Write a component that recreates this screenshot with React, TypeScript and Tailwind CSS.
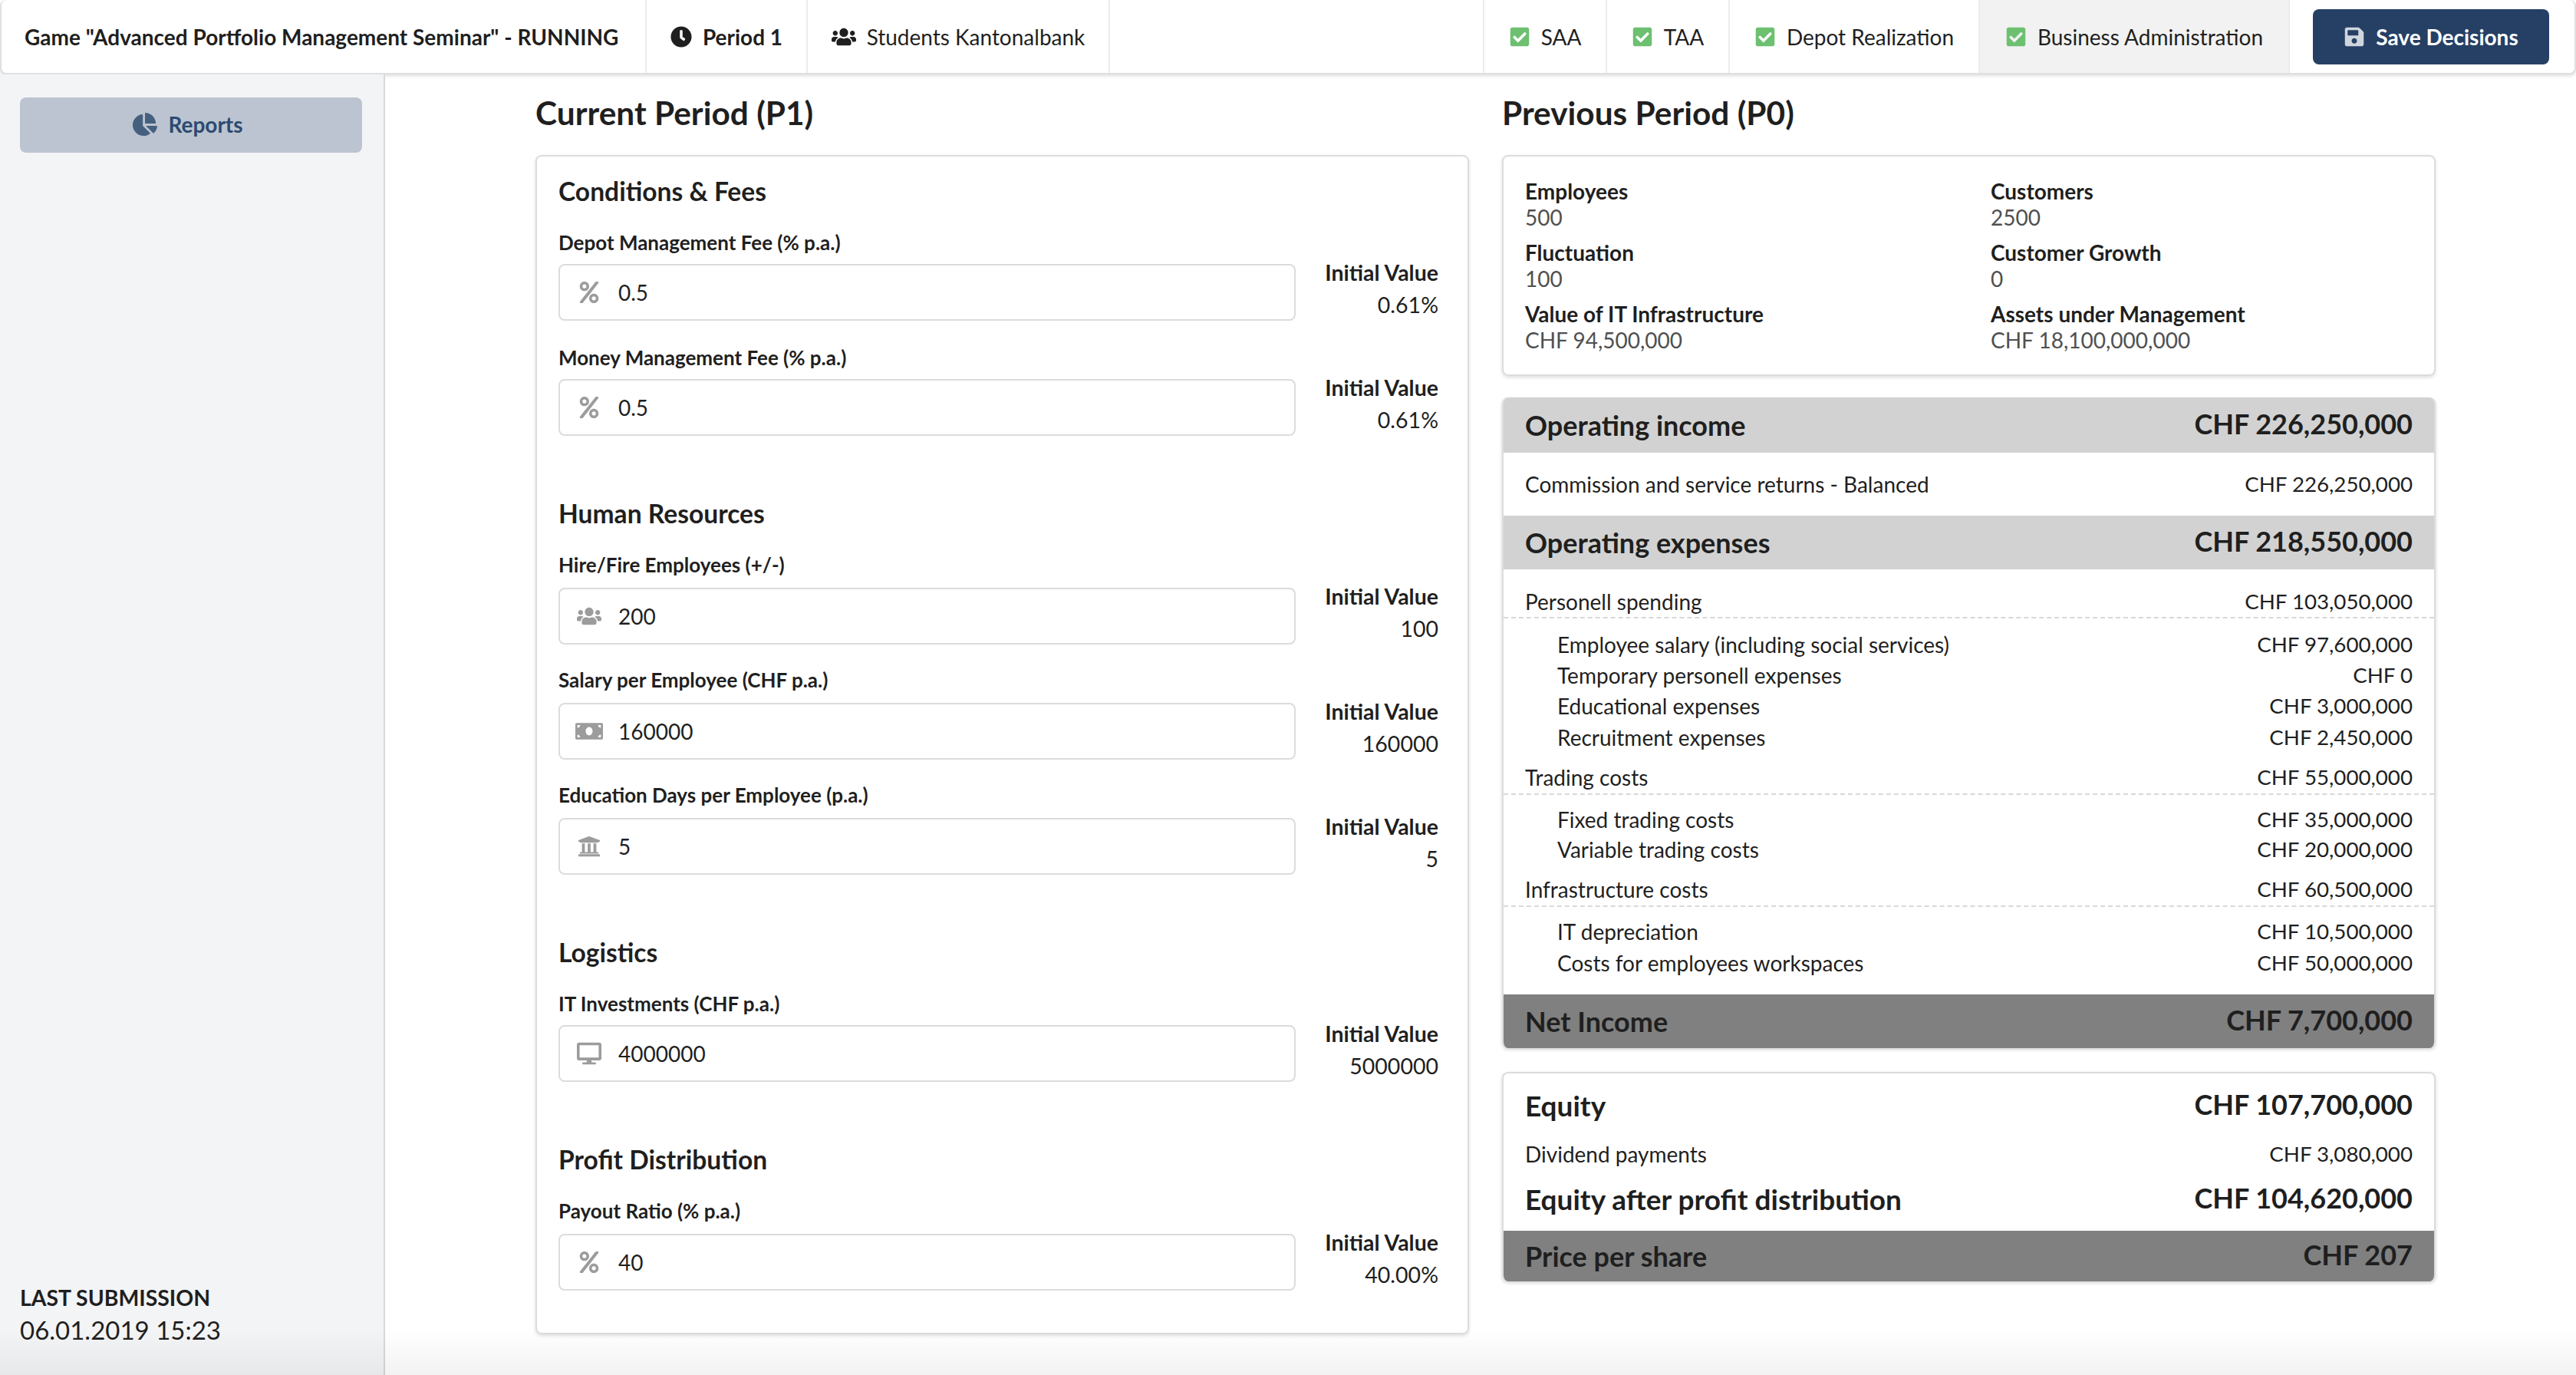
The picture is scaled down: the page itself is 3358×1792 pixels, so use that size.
import type { ReactNode } from "react";
import {
  FaChartPie,
  FaCheckSquare,
  FaClock,
  FaDesktop,
  FaMoneyBill,
  FaPercent,
  FaSave,
  FaUniversity,
  FaUsers,
} from "react-icons/fa";

const Field = ({
  label,
  icon,
  value,
  initial,
  low,
}: {
  label: string;
  icon: ReactNode;
  value: string;
  initial: string;
  low?: boolean;
}) => (
  <div className={`last:mb-0 ${low ? "mb-[26px]" : "mb-[28px]"}`}>
    <div className="flex h-[40px] items-center text-[26px] font-bold leading-none">{label}</div>
    <div className={`flex h-[74px] ${low ? "mt-[10px]" : "mt-[8px]"}`}>
      <div className="flex h-[74px] w-[961px] items-center rounded-[8px] border-2 border-[#dcdcdd] text-[28px]">
        <span className="flex w-[76px] justify-center text-[#9c9c9c]">{icon}</span>
        <span>{value}</span>
      </div>
      <div className="-mt-[10px] flex-1 pr-[10px] text-right text-[28.5px] leading-[42px]">
        <div className="font-bold">Initial Value</div>
        <div>{initial}</div>
      </div>
    </div>
  </div>
);

const Section = ({ title, children, mt = "" }: { title: string; children: ReactNode; mt?: string }) => (
  <section className={mt}>
    <h3 className="mb-[24px] flex h-[44px] items-center text-[33.6px] font-bold leading-none">{title}</h3>
    {children}
  </section>
);

const Stat = ({ label, value }: { label: string; value: string }) => (
  <div className="h-[80px] text-[28px] leading-[34px]">
    <div className="font-bold">{label}</div>
    <div className="text-[#505050]">{value}</div>
  </div>
);

const Band = ({ label, value, h, dark }: { label: string; value: string; h: string; dark?: boolean }) => (
  <div className={`flex items-center justify-between px-[28px] text-[36px] font-bold ${h} ${dark ? "bg-[#808080]" : "bg-[#d2d2d2]"}`}>
    <span>{label}</span>
    <span className="pb-[4px]">{value}</span>
  </div>
);

const Row = ({ label, value, h, sub, dashed }: { label: string; value: string; h: string; sub?: boolean; dashed?: boolean }) => (
  <div
    className={`flex items-center justify-between pr-[28px] text-[28px] ${h} ${sub ? "pl-[70px]" : "pl-[28px]"} ${
      dashed ? "border-b-2 border-dashed border-[#d8d8d8]" : ""
    }`}
  >
    <span>{label}</span>
    <span className="text-[27.7px]">{value}</span>
  </div>
);

const BoldRow = ({ label, value, h }: { label: string; value: string; h: string }) => (
  <div className={`flex items-center justify-between px-[28px] font-bold ${h}`}>
    <span className="text-[37px]">{label}</span>
    <span className="pb-[4px] text-[36px]">{value}</span>
  </div>
);

const TopItem = ({ children, w, active }: { children: ReactNode; w: string; active?: boolean }) => (
  <div className={`flex h-full items-center justify-center gap-[14px] border-r-2 border-[#ececec] ${w} ${active ? "bg-[#f2f2f2]" : ""}`}>
    {children}
  </div>
);

const Check = () => <FaCheckSquare className="text-[28px] text-[#6cc070]" />;

export default function App() {
  return (
    <div className="relative h-[1792px] w-[3358px] overflow-hidden bg-white font-['Lato','Open_Sans',sans-serif] text-[28px] text-[#1f1f1f]">
      <header className="flex h-[97px] rounded-[8px] border-2 border-t-0 border-[#e0e0e0] bg-white shadow-[0_2px_4px_rgba(34,36,38,0.15)]">
        <div className="flex h-full w-[841px] items-center border-r-2 border-[#ececec] pl-[30px]">
          <span className="font-bold">Game "Advanced Portfolio Management Seminar" - RUNNING</span>
        </div>
        <TopItem w="w-[210px]">
          <FaClock className="text-[28px]" />
          <span className="font-bold">Period 1</span>
        </TopItem>
        <TopItem w="w-[394px]">
          <FaUsers className="text-[32px]" />
          <span>Students Kantonalbank</span>
        </TopItem>
        <div className="flex-1 border-r-2 border-[#ececec]" />
        <TopItem w="w-[160px]"><Check /><span>SAA</span></TopItem>
        <TopItem w="w-[160px]"><Check /><span>TAA</span></TopItem>
        <TopItem w="w-[326px]"><Check /><span>Depot Realization</span></TopItem>
        <TopItem w="w-[404px]" active><Check /><span>Business Administration</span></TopItem>
        <div className="w-[371px] pl-[30px] pt-[12px]">
          <button className="flex h-[72px] w-[308px] items-center justify-center gap-[14px] rounded-[8px] bg-[#264065] font-bold text-white">
            <FaSave className="text-[28px] text-[#d0d5dd]" />
            Save Decisions
          </button>
        </div>
      </header>

      <div className="flex h-[1695px]">
        <aside className="flex w-[502px] flex-col justify-between border-r-2 border-[#d8d8d8] bg-[#f3f4f6] pb-[37px] pl-[26px] pr-[28px] pt-[30px]">
          <div className="flex h-[72px] items-center justify-center gap-[14px] rounded-[8px] bg-[#bbc4d0] pb-[2px] pr-[8px] font-bold text-[#2c4a70]">
            <FaChartPie className="text-[32px] text-[#45607f]" />
            Reports
          </div>
          <div>
            <div className="text-[28.4px] font-bold leading-[40px]">LAST SUBMISSION</div>
            <div className="text-[33px] leading-[44px]">06.01.2019 15:23</div>
          </div>
        </aside>

        <main className="flex flex-1 gap-[43px] pl-[196px]">
          <div className="w-[1217px]">
            <h2 className="flex h-[105px] items-center pb-[4px] text-[42.4px] font-bold leading-none">Current Period (P1)</h2>
            <div className="rounded-[8px] border-2 border-[#dcdcdd] px-[28px] pb-[55px] pt-[24px] shadow-[0_2px_4px_rgba(34,36,38,0.15)]">
              <Section title="Conditions & Fees">
                <Field label="Depot Management Fee (% p.a.)" icon={<FaPercent className="text-[28px]" />} value="0.5" initial="0.61%" />
                <Field label="Money Management Fee (% p.a.)" icon={<FaPercent className="text-[28px]" />} value="0.5" initial="0.61%" />
              </Section>
              <Section title="Human Resources" mt="mt-[80px]">
                <Field low label="Hire/Fire Employees (+/-)" icon={<FaUsers className="text-[32px]" />} value="200" initial="100" />
                <Field low label="Salary per Employee (CHF p.a.)" icon={<FaMoneyBill className="text-[36px]" />} value="160000" initial="160000" />
                <Field low label="Education Days per Employee (p.a.)" icon={<FaUniversity className="text-[30px]" />} value="5" initial="5" />
              </Section>
              <Section title="Logistics" mt="mt-[80px]">
                <Field label="IT Investments (CHF p.a.)" icon={<FaDesktop className="text-[32px]" />} value="4000000" initial="5000000" />
              </Section>
              <Section title="Profit Distribution" mt="mt-[80px]">
                <Field low label="Payout Ratio (% p.a.)" icon={<FaPercent className="text-[28px]" />} value="40" initial="40.00%" />
              </Section>
            </div>
          </div>

          <div className="w-[1217px]">
            <h2 className="flex h-[105px] items-center pb-[4px] text-[42.4px] font-bold leading-none">Previous Period (P0)</h2>
            <div className="grid h-[288px] grid-cols-[607px_1fr] content-start rounded-[8px] border-2 border-[#dcdcdd] px-[28px] pt-[28px] shadow-[0_2px_4px_rgba(34,36,38,0.15)]">
              <Stat label="Employees" value="500" />
              <Stat label="Customers" value="2500" />
              <Stat label="Fluctuation" value="100" />
              <Stat label="Customer Growth" value="0" />
              <Stat label="Value of IT Infrastructure" value="CHF 94,500,000" />
              <Stat label="Assets under Management" value="CHF 18,100,000,000" />
            </div>

            <div className="mt-[28px] overflow-hidden rounded-[8px] border-x-2 border-[#dcdcdd] shadow-[0_2px_4px_rgba(34,36,38,0.2)]">
              <Band label="Operating income" value="CHF 226,250,000" h="h-[72px]" />
              <Row label="Commission and service returns - Balanced" value="CHF 226,250,000" h="h-[82px]" />
              <Band label="Operating expenses" value="CHF 218,550,000" h="h-[70px]" />
              <div className="h-[22px]" />
              <Row label="Personell spending" value="CHF 103,050,000" h="h-[42px]" dashed />
              <div className="h-[14px]" />
              <Row label="Employee salary (including social services)" value="CHF 97,600,000" h="h-[40px]" sub />
              <Row label="Temporary personell expenses" value="CHF 0" h="h-[40px]" sub />
              <Row label="Educational expenses" value="CHF 3,000,000" h="h-[40px]" sub />
              <Row label="Recruitment expenses" value="CHF 2,450,000" h="h-[42px]" sub />
              <div className="h-[10px]" />
              <Row label="Trading costs" value="CHF 55,000,000" h="h-[44px]" dashed />
              <div className="h-[12px]" />
              <Row label="Fixed trading costs" value="CHF 35,000,000" h="h-[39px]" sub />
              <Row label="Variable trading costs" value="CHF 20,000,000" h="h-[40px]" sub />
              <div className="h-[11px]" />
              <Row label="Infrastructure costs" value="CHF 60,500,000" h="h-[44px]" dashed />
              <div className="h-[12px]" />
              <Row label="IT depreciation" value="CHF 10,500,000" h="h-[40px]" sub />
              <Row label="Costs for employees workspaces" value="CHF 50,000,000" h="h-[42px]" sub />
              <div className="h-[20px]" />
              <Band label="Net Income" value="CHF 7,700,000" h="h-[70px]" dark />
            </div>

            <div className="mt-[31px] overflow-hidden rounded-[8px] border-x-2 border-t-2 border-[#dcdcdd] shadow-[0_2px_4px_rgba(34,36,38,0.2)]">
              <BoldRow label="Equity" value="CHF 107,700,000" h="h-[84px]" />
              <Row label="Dividend payments" value="CHF 3,080,000" h="h-[42px]" />
              <BoldRow label="Equity after profit distribution" value="CHF 104,620,000" h="h-[79px] pb-[3px]" />
              <Band label="Price per share" value="CHF 207" h="h-[66px]" dark />
            </div>
          </div>
        </main>
      </div>

      <div className="pointer-events-none absolute bottom-0 left-0 h-[60px] w-full bg-gradient-to-b from-transparent to-black/5" />
    </div>
  );
}
